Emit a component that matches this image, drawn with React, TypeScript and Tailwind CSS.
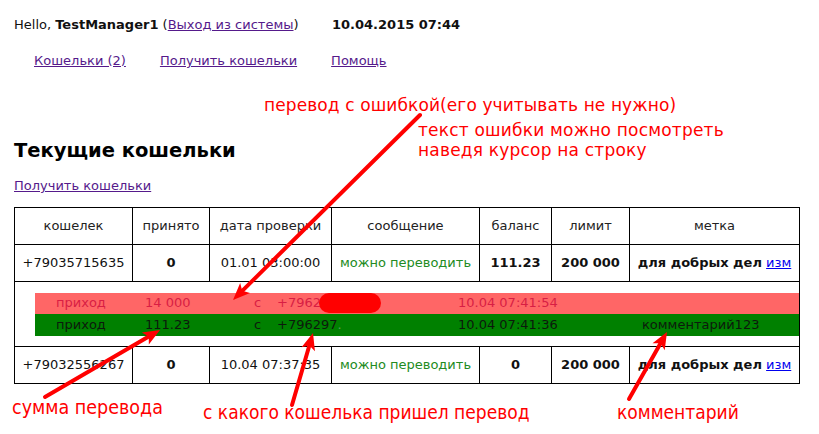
import React from "react";

const ARROWS: [number, number, number, number][] = [
  [420, 115, 233, 300],
  [45, 397, 160, 330],
  [292, 405, 313, 333],
  [629, 399, 667, 332],
];

function Arrow({ x1, y1, x2, y2 }: { x1: number; y1: number; x2: number; y2: number }) {
  const dx = x2 - x1;
  const dy = y2 - y1;
  const len = Math.hypot(dx, dy);
  const ux = dx / len;
  const uy = dy / len;
  const head = 17;
  const half = 7;
  const bx = x2 - ux * head;
  const by = y2 - uy * head;
  const pts = [
    `${x2},${y2}`,
    `${bx - uy * half},${by + ux * half}`,
    `${bx + ux * 4},${by + uy * 4}`,
    `${bx + uy * half},${by - ux * half}`,
  ].join(" ");
  return (
    <g>
      <line x1={x1} y1={y1} x2={bx + ux * 4} y2={by + uy * 4} stroke="#f00" strokeWidth={4} strokeLinecap="round" />
      <polygon points={pts} fill="#f00" />
    </g>
  );
}

const th = "border border-black text-center font-normal text-[13px] text-[#222]";
const td = "border border-black text-center text-[13px] text-[#111]";

function WalletRow({ phone, got, date, balance }: { phone: string; got: string; date: string; balance: string }) {
  return (
    <tr className="h-[37px]">
      <td className={td}>{phone}</td>
      <td className={td + " font-bold"}>{got}</td>
      <td className={td}>{date}</td>
      <td className={td + " text-[#228b22]"}>можно переводить</td>
      <td className={td + " font-bold"}>{balance}</td>
      <td className={td + " font-bold"}>200 000</td>
      <td className={td}>
        <b>для добрых дел</b>{" "}
        <a href="#" className="text-[#0000ee] underline">изм</a>
      </td>
    </tr>
  );
}

export default function App() {
  const ref = (
    <tr className="h-[65px]">
      <td colSpan={7} className="border border-black pl-[20px] pr-0 py-0 text-[13px]">
        <div className="flex h-[21px] items-center bg-[#ff6666] text-[#d81e44]">
          <span className="w-[110px] pl-[21px]">приход</span>
          <span className="w-[109px]">14 000</span>
          <span className="w-[23px]">с</span>
          <span className="flex w-[181px] items-center">
            +7962
            <span className="-ml-[2px] inline-block h-[20px] w-[62px] rounded-full bg-[#f00]" />
          </span>
          <span className="w-[184px]">10.04 07:41:54</span>
        </div>
        <div className="flex h-[22px] items-center bg-[#008000] text-[#0c1a0c]">
          <span className="w-[110px] pl-[21px]">приход</span>
          <span className="w-[109px]">111.23</span>
          <span className="w-[23px]">с</span>
          <span className="w-[181px]">
            +796297<span className="text-[#5a9a5a]">.</span>
          </span>
          <span className="w-[184px]">10.04 07:41:36</span>
          <span>комментарий123</span>
        </div>
      </td>
    </tr>
  );

  return (
    <div className="relative h-[434px] w-[819px] overflow-hidden bg-white font-['DejaVu_Sans',sans-serif] text-[13px] text-[#111]">
      <div className="pl-[14px] pt-[17px]">
        <div className="flex h-[16px] items-center leading-[16px]">
          <span className="w-[318px]">
            Hello, <b>TestManager1</b> (
            <a href="#" className="text-[#551a8b] underline">Выход из системы</a>)
          </span>
          <b>10.04.2015 07:44</b>
        </div>
        <nav className="ml-[20px] mt-[20px] flex h-[16px] gap-[34px] leading-[16px]">
          <a href="#" className="text-[#551a8b] underline">Кошельки (2)</a>
          <a href="#" className="text-[#551a8b] underline">Получить кошельки</a>
          <a href="#" className="text-[#551a8b] underline">Помощь</a>
        </nav>
        <h1 className="mt-[70px] h-[24px] text-[19.5px] font-bold leading-[24px] text-black">Текущие кошельки</h1>
        <div className="mt-[15px] h-[16px] leading-[16px]">
          <a href="#" className="text-[#551a8b] underline">Получить кошельки</a>
        </div>
        <table className="mt-[13px] w-[785px] table-fixed border-collapse">
          <colgroup>
            <col className="w-[118px]" />
            <col className="w-[77px]" />
            <col className="w-[122px]" />
            <col className="w-[148px]" />
            <col className="w-[72px]" />
            <col className="w-[78px]" />
            <col className="w-[170px]" />
          </colgroup>
          <thead>
            <tr className="h-[37px]">
              <th className={th}>кошелек</th>
              <th className={th}>принято</th>
              <th className={th}>дата проверки</th>
              <th className={th}>сообщение</th>
              <th className={th}>баланс</th>
              <th className={th}>лимит</th>
              <th className={th}>метка</th>
            </tr>
          </thead>
          <tbody>
            <WalletRow phone="+79035715635" got="0" date="01.01 03:00:00" balance="111.23" />
            {ref}
            <WalletRow phone="+79032556267" got="0" date="10.04 07:37:35" balance="0" />
          </tbody>
        </table>
      </div>

      <div className="absolute left-[264px] top-[95px] text-[17px] leading-[20px] tracking-[0.1px] text-[#f00]">
        перевод с ошибкой(его учитывать не нужно)
      </div>
      <div className="absolute left-[418px] top-[120px] text-[17px] leading-[20px] tracking-[0.2px] text-[#f00]">
        текст ошибки можно посмотреть
        <br />
        наведя курсор на строку
      </div>
      <div className="absolute left-[12px] top-[396px] font-['DejaVu_Sans_Condensed','DejaVu_Sans',sans-serif] text-[19.5px] leading-[24px] text-[#f00]">
        сумма перевода
      </div>
      <div className="absolute left-[203px] top-[400px] font-['DejaVu_Sans_Condensed','DejaVu_Sans',sans-serif] text-[19px] leading-[24px] text-[#f00]">
        с какого кошелька пришел перевод
      </div>
      <div className="absolute left-[617px] top-[400px] font-['DejaVu_Sans_Condensed','DejaVu_Sans',sans-serif] text-[19px] leading-[24px] text-[#f00]">
        комментарий
      </div>

      <svg className="pointer-events-none absolute left-0 top-0" width={819} height={434}>
        {ARROWS.map(([x1, y1, x2, y2], i) => (
          <Arrow key={i} x1={x1} y1={y1} x2={x2} y2={y2} />
        ))}
      </svg>
    </div>
  );
}
